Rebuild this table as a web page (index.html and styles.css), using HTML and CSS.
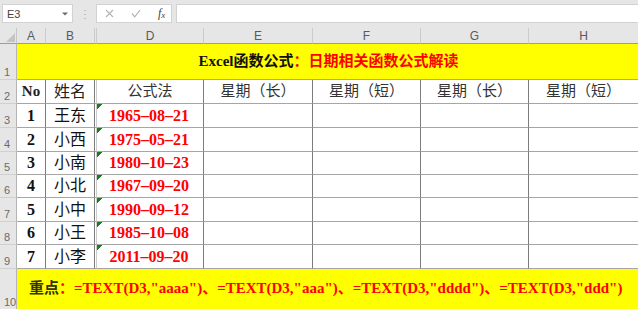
FILE: index.html
```html
<!DOCTYPE html>
<html lang="zh">
<head>
<meta charset="utf-8">
<title>Excel</title>
<link rel="stylesheet" href="styles.css">
</head>
<body>
<div class="app">
  <div class="toolbar">
    <div class="namebox">
      <span class="name">E3</span>
      <svg class="caret" width="6" height="4" viewBox="0 0 6 4"><path d="M0 0.5H6L3 3.5Z" fill="#6a6a6a"/></svg>
    </div>
    <div class="grip">
      <svg width="2" height="9" viewBox="0 0 2 9"><rect x="0.5" y="0" width="1" height="1" fill="#9a9a9a"/><rect x="0.5" y="4" width="1" height="1" fill="#9a9a9a"/><rect x="0.5" y="8" width="1" height="1" fill="#9a9a9a"/></svg>
    </div>
    <div class="fxbox">
      <svg class="ico" width="9" height="9" viewBox="0 0 9 9"><path d="M1 1L8 8M8 1L1 8" stroke="#b4b4b4" stroke-width="1.1" fill="none"/></svg>
      <svg class="ico" width="10" height="9" viewBox="0 0 10 9"><path d="M1 4.5L3.8 7.8L9 1" stroke="#b4b4b4" stroke-width="1.2" fill="none"/></svg>
      <span class="fx">f<span class="fxs">x</span></span>
    </div>
    <div class="formula"></div>
  </div>

  <div class="sheet">
    <div class="corner"><svg width="9" height="9" viewBox="0 0 9 9"><path d="M9 0V9H0Z" fill="#c4c4c4"/></svg></div>
    <div class="ch">A</div>
    <div class="ch">B</div>
    <div class="ch chid"></div>
    <div class="ch">D</div>
    <div class="ch">E</div>
    <div class="ch">F</div>
    <div class="ch">G</div>
    <div class="ch">H</div>

    <div class="rh">1</div>
    <div class="title"><span class="tb">Excel函数公式</span><span class="tr">：日期相关函数公式解读</span></div>

    <div class="rh">2</div>
    <div class="c hd b">No</div>
    <div class="c hd">姓名</div>
    <div class="c hid"></div>
    <div class="c hd sm">公式法</div>
    <div class="c hd sm">星期（长）</div>
    <div class="c hd sm">星期（短）</div>
    <div class="c hd sm">星期（长）</div>
    <div class="c hd sm g">星期（短）</div>

    <div class="rh">3</div>
    <div class="c num">1</div>
    <div class="c nm">王东</div>
    <div class="c hid"></div>
    <div class="c dt">1965–08–21</div>
    <div class="c"></div><div class="c"></div><div class="c"></div><div class="c g"></div>

    <div class="rh">4</div>
    <div class="c num">2</div>
    <div class="c nm">小西</div>
    <div class="c hid"></div>
    <div class="c dt">1975–05–21</div>
    <div class="c"></div><div class="c"></div><div class="c"></div><div class="c g"></div>

    <div class="rh">5</div>
    <div class="c num">3</div>
    <div class="c nm">小南</div>
    <div class="c hid"></div>
    <div class="c dt">1980–10–23</div>
    <div class="c"></div><div class="c"></div><div class="c"></div><div class="c g"></div>

    <div class="rh">6</div>
    <div class="c num">4</div>
    <div class="c nm">小北</div>
    <div class="c hid"></div>
    <div class="c dt">1967–09–20</div>
    <div class="c"></div><div class="c"></div><div class="c"></div><div class="c g"></div>

    <div class="rh">7</div>
    <div class="c num">5</div>
    <div class="c nm">小中</div>
    <div class="c hid"></div>
    <div class="c dt">1990–09–12</div>
    <div class="c"></div><div class="c"></div><div class="c"></div><div class="c g"></div>

    <div class="rh">8</div>
    <div class="c num">6</div>
    <div class="c nm">小王</div>
    <div class="c hid"></div>
    <div class="c dt">1985–10–08</div>
    <div class="c"></div><div class="c"></div><div class="c"></div><div class="c g"></div>

    <div class="rh">9</div>
    <div class="c num">7</div>
    <div class="c nm">小李</div>
    <div class="c hid"></div>
    <div class="c dt">2011–09–20</div>
    <div class="c"></div><div class="c"></div><div class="c"></div><div class="c g"></div>

    <div class="rh">10</div>
    <div class="note"><span class="nk">重点</span><span class="nr">：=TEXT(D3,"aaaa")、=TEXT(D3,"aaa")、=TEXT(D3,"dddd")、=TEXT(D3,"ddd")</span></div>
  </div>
</div>
</body>
</html>
```

FILE: styles.css
```css
* {
  box-sizing: border-box;
  margin: 0;
  padding: 0;
}

html,
body {
  width: 638px;
  height: 309px;
  overflow: hidden;
  background: #e6e6e6;
}

body {
  font-family: "Liberation Sans", Arial, sans-serif;
}

.app {
  display: flex;
  flex-direction: column;
  width: 638px;
}

/* ---------- formula toolbar ---------- */
.toolbar {
  display: flex;
  align-items: flex-start;
  height: 28px;
  padding: 4px 0 0 2px;
  background: #e6e6e6;
}

.namebox {
  display: flex;
  align-items: center;
  justify-content: space-between;
  width: 71px;
  height: 19px;
  padding: 0 4px 0 4px;
  background: #ffffff;
  border: 1px solid #d2d2d2;
  font-size: 11px;
  color: #444444;
}

.caret {
  display: block;
}

.grip {
  display: flex;
  justify-content: center;
  width: 23px;
  padding-top: 6px;
}

.grip svg {
  display: block;
}

.fxbox {
  display: flex;
  align-items: center;
  gap: 17px;
  width: 76px;
  height: 19px;
  padding-left: 8px;
  background: #ffffff;
  border: 1px solid #d2d2d2;
}

.ico {
  display: block;
}

.fx {
  font-family: "Liberation Serif", "Times New Roman", serif;
  font-style: italic;
  font-size: 12px;
  color: #444444;
  line-height: 1;
}

.fxs {
  font-size: 9px;
  vertical-align: -1px;
}

.formula {
  flex: 1;
  height: 19px;
  margin-left: 4px;
  margin-right: -2px;
  background: #ffffff;
  border: 1px solid #d2d2d2;
}

/* ---------- sheet grid ---------- */
.sheet {
  display: grid;
  grid-template-columns: 17px 29px 49px 2px 107px 109px 108px 108px 110px;
  grid-template-rows: 16px 36px 24px 24px 24px 23px 23px 24px 23px 24px 41px;
  width: 639px;
  background: #ffffff;
}

.corner {
  display: flex;
  align-items: flex-end;
  justify-content: flex-end;
  padding: 0 1px 1px 0;
  background: #e6e6e6;
  border-right: 1px solid #c6c6c6;
  border-bottom: 1px solid #9c9c9c;
}

.corner svg {
  display: block;
}

.ch {
  display: flex;
  align-items: flex-end;
  justify-content: center;
  padding-bottom: 0;
  background: #e6e6e6;
  border-right: 1px solid #cbcbcb;
  border-bottom: 1px solid #9c9c9c;
  font-size: 12px;
  line-height: 14px;
  color: #5a5a5a;
}

.rh {
  display: flex;
  align-items: flex-end;
  padding: 0 0 0 4px;
  background: #e6e6e6;
  border-right: 1px solid #b4b4b4;
  border-bottom: 1px solid #d0d0d0;
  font-size: 11px;
  line-height: 13px;
  color: #6a6a6a;
}

.title {
  grid-column: 2 / -1;
  display: flex;
  align-items: center;
  justify-content: center;
  background: #ffff00;
  border-bottom: 1px solid #a8a8a8;
  font-family: "Liberation Serif", "Noto Sans CJK SC", serif;
  font-size: 15px;
  font-weight: bold;
  line-height: 1;
  padding-left: 1px;
}

.tb {
  color: #111111;
}

.tr {
  color: #ff0000;
}

.c {
  display: flex;
  align-items: center;
  justify-content: center;
  background: #ffffff;
  border-right: 1px solid #7c7c7c;
  border-bottom: 1px solid #a6a6a6;
  font-family: "Liberation Serif", "Noto Sans CJK SC", serif;
  font-size: 16px;
  line-height: 1;
  color: #111111;
}

.c.g {
  border-right-color: #c4c4c4;
}

.c.hid {
  border-right-color: #cccccc;
}

.hd {
  color: #222222;
}

.hd.sm {
  font-size: 15px;
  color: #333333;
}

.b {
  font-weight: bold;
  font-size: 15px;
}

.num {
  font-weight: bold;
}

.nm {
  font-size: 16px;
}

.dt {
  padding-right: 2px;
  font-weight: bold;
  color: #ff0000;
  background-image: linear-gradient(135deg, #1f7a1f 0, #1f7a1f 3.6px, transparent 3.6px);
  background-size: 6px 6px;
  background-repeat: no-repeat;
}

.note {
  grid-column: 2 / -1;
  display: flex;
  align-items: center;
  padding: 0 0 3px 12px;
  background: #ffff00;
  font-family: "Liberation Serif", "Noto Sans CJK SC", serif;
  font-size: 15px;
  font-weight: bold;
  line-height: 1;
  white-space: nowrap;
}

.nk {
  color: #333300;
}

.nr {
  color: #ff0000;
}
```
